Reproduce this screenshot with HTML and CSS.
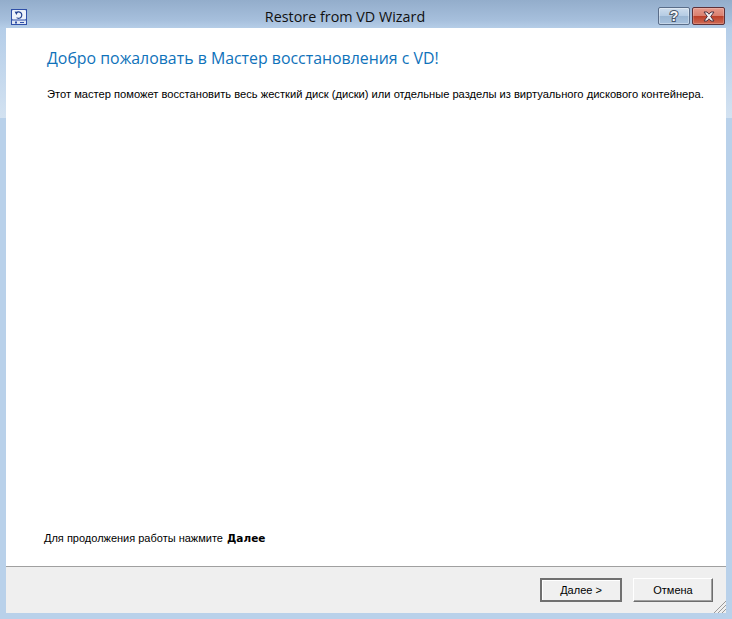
FILE: index.html
```html
<!DOCTYPE html>
<html lang="ru">
<head>
<meta charset="utf-8">
<title>Restore from VD Wizard</title>
<link rel="stylesheet" href="styles.css">
</head>
<body>
<div class="window">
  <div class="glare"></div>
  <header class="titlebar">
    <svg class="app-icon" width="16" height="16" viewBox="0 0 16 16">
      <rect x="0" y="0" width="16" height="16" fill="#2f4fa8"/>
      <rect x="1" y="1" width="14" height="9.5" rx="1" fill="#eef2fa"/>
      <rect x="1" y="11.5" width="14" height="3.5" fill="#dfe6f3"/>
      <rect x="4" y="12.5" width="2" height="2" fill="#2f4fa8"/>
      <rect x="9" y="13" width="4" height="1" fill="#2f4fa8"/>
      <path d="M5 4.2 A3.2 3.2 0 1 1 5.6 8.6" fill="none" stroke="#22408f" stroke-width="1.2"/>
      <path d="M3.6 2.6 L7 3 L5.4 6 Z" fill="#22408f"/>
    </svg>
    <div class="title">Restore from VD Wizard</div>
    <div class="caption-buttons">
      <div class="cap cap-help">?</div>
      <div class="cap cap-close">
        <svg width="14" height="11" viewBox="0 0 14 11">
          <path d="M2 1 H5 L7 3.2 L9 1 H12 L8.7 5.5 L12 10 H9 L7 7.8 L5 10 H2 L5.3 5.5 Z" fill="#f2f0f2" stroke="#4d3340" stroke-width="1"/>
        </svg>
      </div>
    </div>
  </header>
  <main class="client">
    <section class="content">
      <h1 class="heading">Добро пожаловать в Мастер восстановления с VD!</h1>
      <p class="intro">Этот мастер поможет восстановить весь жесткий диск (диски) или отдельные разделы из виртуального дискового контейнера.</p>
      <p class="hint">Для продолжения работы нажмите <b>Далее</b></p>
    </section>
    <footer class="footer">
      <button class="btn btn-default">Далее &gt;</button>
      <button class="btn">Отмена</button>
      <svg class="grip" width="13" height="13" viewBox="0 0 13 13">
        <path d="M13 1 L1 13 M13 5 L5 13 M13 9 L9 13" stroke="#9a9a9a" stroke-width="1"/>
      </svg>
    </footer>
  </main>
</div>
</body>
</html>
```
FILE: styles.css
```css
* { box-sizing: border-box; }
html, body { margin: 0; height: 100%; overflow: hidden; }
body { font-family: "Liberation Sans", Arial, sans-serif; background: #b9d1ea; }
.window {
  position: relative;
  width: 732px;
  height: 619px;
  display: flex;
  flex-direction: column;
  padding: 0 6px 6px;
  background: linear-gradient(#93adcb 0, #a6bfdc 20px, #b9d1ea 30px);
}
.glare {
  position: absolute;
  left: 0;
  top: 28px;
  right: 0;
  height: 90px;
  background: linear-gradient(#b4cde8, #d3e2f1);
}
.titlebar {
  position: relative;
  height: 28px;
  flex: none;
  display: flex;
  align-items: flex-start;
}
.app-icon { position: absolute; left: 5px; top: 9px; }
.title {
  flex: 1;
  text-align: center;
  font-family: "Open Sans", sans-serif;
  font-size: 14.35px;
  line-height: 19px;
  padding: 7px 42px 0 0;
  color: #111;
}
.caption-buttons {
  position: absolute;
  right: 1px;
  top: 7px;
  display: flex;
  gap: 2px;
}
.cap {
  height: 18px;
  border-radius: 2px;
  display: flex;
  align-items: center;
  justify-content: center;
}
.cap-help {
  width: 32px;
  border: 1px solid #5a6d89;
  background: linear-gradient(#cfdded 0, #b4cbe4 50%, #9bb6d3 52%, #a8c2de 100%);
  box-shadow: inset 0 0 0 1px rgba(255,255,255,.35);
  color: #f6f7f9;
  font: bold 14px/16px "Liberation Sans", sans-serif;
  -webkit-text-stroke: 2px #4a5568;
  paint-order: stroke fill;
}
.cap-close {
  width: 33px;
  border: 1px solid #5d3138;
  background: linear-gradient(#e69a8c 0, #d97f6e 50%, #bc3f28 52%, #cf6a55 100%);
  box-shadow: inset 0 0 0 1px rgba(255,255,255,.2);
}
.client {
  position: relative;
  flex: 1;
  min-height: 0;
  display: flex;
  flex-direction: column;
  background: #fff;
}
.content {
  flex: 1;
  display: flex;
  flex-direction: column;
  padding: 18px 0 0 41px;
}
.heading {
  margin: 0;
  font-family: "Open Sans", sans-serif;
  font-weight: 400;
  font-size: 15.88px;
  line-height: 24px;
  color: #0f72ba;
}
.intro {
  margin: 17px 0 0;
  font-size: 11.15px;
  line-height: 14px;
  color: #000;
}
.hint {
  margin: auto 0 0 -3px;
  padding-bottom: 21px;
  font-size: 11px;
  line-height: 14px;
  color: #000;
}
.hint b { font-family: "DejaVu Sans", sans-serif; font-size: 10.5px; margin-left: 1px; }
.footer {
  position: relative;
  height: 47px;
  flex: none;
  display: flex;
  justify-content: flex-end;
  align-items: flex-start;
  gap: 11px;
  padding: 11px 13px 0 0;
  background: #efefef;
  border-top: 1px solid #a0a0a0;
}
.btn {
  width: 80px;
  height: 24px;
  padding: 0;
  font: 11px "Liberation Sans", sans-serif;
  color: #000;
  background: #f0f0f0;
  border: 1px solid;
  border-color: #fff #6d6d6d #6d6d6d #fff;
  box-shadow: inset -1px -1px 0 #a0a0a0;
}
.btn-default {
  width: 82px;
  border: 2px solid;
  border-color: #707070;
  box-shadow: inset 1px 1px 0 #fff;
}
.grip { position: absolute; right: 0; bottom: 0; }
```
